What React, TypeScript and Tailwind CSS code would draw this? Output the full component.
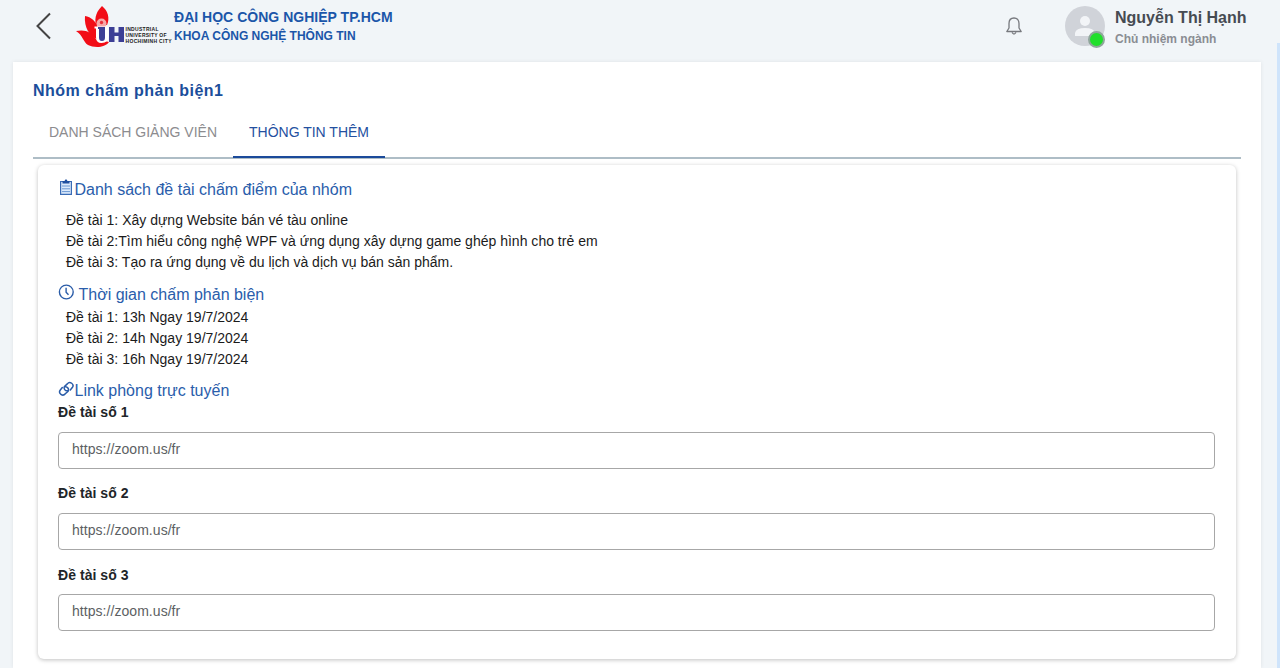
function Logo() {
  return (
    <svg viewBox="0 0 96 42" className="h-[42px] w-24 shrink-0" aria-label="IUH">
      <path d="M26 0C21 5 18 11 20 19L31 19C34 12 32 5 26 0Z" fill="#f20d17" />
      <path d="M9 10C15 11 20 15 22 22L21 33C13 30 8 21 9 10Z" fill="#f20d17" />
      <path d="M0 25C9 23 16 26 20 33C23 36 27 34.500 33 36C29 42 18 42 12 39C7 36 7 29 0 25Z" fill="#f20d17" />
      <circle cx="25.500" cy="17.500" r="5" fill="#f6a9aa" />
      <circle cx="25.500" cy="16.500" r="1.700" fill="#e8323c" />
      <path d="M18.500 20.500H32.500V30Q32.500 37 25.500 37Q20 37 20 31V22.500H18.500Z" fill="#fff" />
      <path d="M22 21H29V31.500Q29 35 26 35Q23 35 23 31.500V23H22Z" fill="#3c3f95" />
      <path d="M33 21H38.500V26.500H42.500V21H48V36H42.500V30H38.500V36H33Z" fill="#3c3f95" />
      <g fill="#222" fontFamily="Liberation Sans, sans-serif" fontWeight="700" fontSize="5">
        <text x="49.500" y="25" textLength="33">INDUSTRIAL</text>
        <text x="49.500" y="30.800" textLength="41">UNIVERSITY OF</text>
        <text x="49.500" y="36.500" textLength="46">HOCHIMINH CITY</text>
      </g>
    </svg>
  );
}

function Clipboard() {
  return (
    <svg viewBox="0 0 12 16" className="h-4 w-3 shrink-0">
      <path d="M.6 2.500H11.400V15.400H.6Z" fill="#dceafb" stroke="#3a6cb5" strokeWidth="1.200" />
      <path d="M2.500 2H4.500Q6-1.500 7.500 2H9.500V4.500H2.500Z" fill="#1f4f9f" />
      <path d="M2 7H10M2 9.800H10M2 12.600H10" stroke="#6a98d2" />
    </svg>
  );
}

function Clock() {
  return (
    <svg viewBox="0 0 16 16" className="-mt-px mr-1 h-4 w-4 shrink-0" fill="none" stroke="#2a5ca8" strokeWidth="1.400">
      <circle cx="8.300" cy="8" r="6.900" />
      <path d="M8.100 3.800V8.200L10.500 10.800" />
    </svg>
  );
}

function LinkIcon() {
  return (
    <svg viewBox="0 0 16 16" className="h-4 w-4 shrink-0" fill="none" stroke="#2a5ca8" strokeWidth="1.500" strokeLinecap="round">
      <path d="M9.600 9.800A3 3 0 0 1 6.500 5.400L9.300 2.900A3.050 3.050 0 0 1 14.300 6.600L12.300 9" />
      <path d="M7 5.800A3 3 0 0 1 10.100 10.200L7.300 12.700A3.050 3.050 0 0 1 2.300 9L4.300 6.600" />
    </svg>
  );
}

const topics = [
  "Đề tài 1: Xây dựng Website bán vé tàu online",
  "Đề tài 2:Tìm hiểu công nghệ WPF và ứng dụng xây dựng game ghép hình cho trẻ em",
  "Đề tài 3: Tạo ra ứng dụng về du lịch và dịch vụ bán sản phẩm.",
];
const times = ["Đề tài 1: 13h Ngay 19/7/2024", "Đề tài 2: 14h Ngay 19/7/2024", "Đề tài 3: 16h Ngay 19/7/2024"];

function Lines({ items }: { items: string[] }) {
  return (
    <ul className="pl-2 text-[14px] leading-[21px] tracking-[0.01px] text-[#1b1b1b]">
      {items.map((t) => (
        <li key={t} className="whitespace-nowrap">{t}</li>
      ))}
    </ul>
  );
}

export default function App() {
  return (
    <div className="relative flex h-[668px] w-[1280px] flex-col overflow-hidden bg-[#f1f5f8] font-['Liberation_Sans',Arial,sans-serif]">
      <header className="flex h-[61px] shrink-0 items-start pl-9">
        <svg viewBox="0 0 16 28" className="mt-3 h-7 w-4" fill="none" stroke="#444" strokeWidth="2">
          <path d="M14 1.500L1.500 14L14 26.500" />
        </svg>
        <div className="ml-6 mt-1.5"><Logo /></div>
        <div className="ml-0.5 mt-2 whitespace-nowrap font-bold text-[#1b56a9]">
          <div className="text-[14px] leading-[19px] tracking-[0.02px]">ĐẠI HỌC CÔNG NGHIỆP TP.HCM</div>
          <div className="text-[12px] leading-[19px]">KHOA CÔNG NGHỆ THÔNG TIN</div>
        </div>
        <div className="ml-auto flex w-[275px] items-start">
          <svg viewBox="0 0 16 18" className="ml-[1px] mt-[17px] h-[18px] w-4" fill="none" stroke="#77797e" strokeWidth="1.300">
            <path d="M8 1C4.500 1 3 3.500 3 6.500V11L.8 14.500H15.200L13 11V6.500C13 3.500 11.500 1 8 1ZM6 15.500Q8 18.500 10 15.500" strokeLinejoin="round" />
          </svg>
          <div className="relative ml-[43px] mt-1.5 h-10 w-10">
            <svg viewBox="0 0 40 40" className="h-10 w-10">
              <circle cx="20" cy="20" r="20" fill="#d0d3d9" />
              <circle cx="20" cy="15" r="5" fill="#f2f4f7" />
              <path d="M10 30V27Q11 22 20 22Q29 22 30 27V30Z" fill="#f2f4f7" />
            </svg>
            <span className="absolute -bottom-[2px] right-0 h-[17px] w-[17px] rounded-full border-2 border-[#8fa69b] bg-[#20df2b]" />
          </div>
          <div className="ml-2.5 mt-2 whitespace-nowrap font-bold">
            <div className="text-[16px] leading-5 text-[#464b52]">Nguyễn Thị Hạnh</div>
            <div className="mt-px text-[12px] leading-5 text-[#8a8d93]">Chủ nhiệm ngành</div>
          </div>
        </div>
      </header>
      <main className="ml-[13px] mt-px flex w-[1248px] grow flex-col bg-white px-5 pt-[19px] shadow-[0_0_4px_rgba(0,0,0,0.08)]">
        <h1 className="text-[16px] font-bold leading-5 tracking-[0.5px] text-[#1b4e9b]">Nhóm chấm phản biện1</h1>
        <div className="mt-[5px] flex h-[53px] w-[1208px] border-b-2 border-[#aebdc6] text-[14px]">
          <div className="flex w-[200px] items-center justify-center whitespace-nowrap pt-0.5 text-[#8c8c8f]">DANH SÁCH GIẢNG VIÊN</div>
          <div className="flex h-[52px] w-[152px] items-center justify-center whitespace-nowrap border-b-2 border-[#1b4a9a] pt-[3px] text-[#2450a0]">THÔNG TIN THÊM</div>
        </div>
        <section className="ml-[5px] mt-1.5 h-[494px] w-[1198px] shrink-0 rounded-md bg-white px-5 pt-[15px] shadow-[0_1px_4px_rgba(0,0,0,0.25)]">
          <h2 className="flex h-5 text-[16px] leading-5 text-[#2a5dab]">
            <span className="-mt-px ml-[2px] mr-[2.500px]"><Clipboard /></span>Danh sách đề tài chấm điểm của nhóm
          </h2>
          <div className="mt-2.5"><Lines items={topics} /></div>
          <h2 className="mt-3 flex h-5 text-[16px] leading-5 text-[#2a5dab]">
            <Clock /><span className="pl-[0.500px]">Thời gian chấm phản biện</span>
          </h2>
          <div className="mt-[2px]"><Lines items={times} /></div>
          <h2 className="mt-[11px] flex h-5 text-[16px] leading-5 text-[#2a5dab]">
            <LinkIcon /><span className="pl-[0.500px]">Link phòng trực tuyến</span>
          </h2>
          <div className="mt-px flex flex-col gap-[14px]">
            {[1, 2, 3].map((n) => (
              <div key={n} className="h-[67.250px]">
                <div className="h-5 text-[14px] font-bold leading-5 tracking-[0.05px] text-[#212529]">Đề tài số {n}</div>
                <div className="mt-[9.900px] flex h-[37px] w-[1157px] items-center rounded-[4px] border border-[#a7a7a7] px-[13px] pb-0.5 text-[14px] tracking-[0.05px] text-[#5c5f63]">
                  https://zoom.us/fr
                </div>
              </div>
            ))}
          </div>
        </section>
      </main>
      <div className="absolute right-0 top-[43px] h-[625px] w-[3px] bg-[#cfe4fb]" />
    </div>
  );
}
